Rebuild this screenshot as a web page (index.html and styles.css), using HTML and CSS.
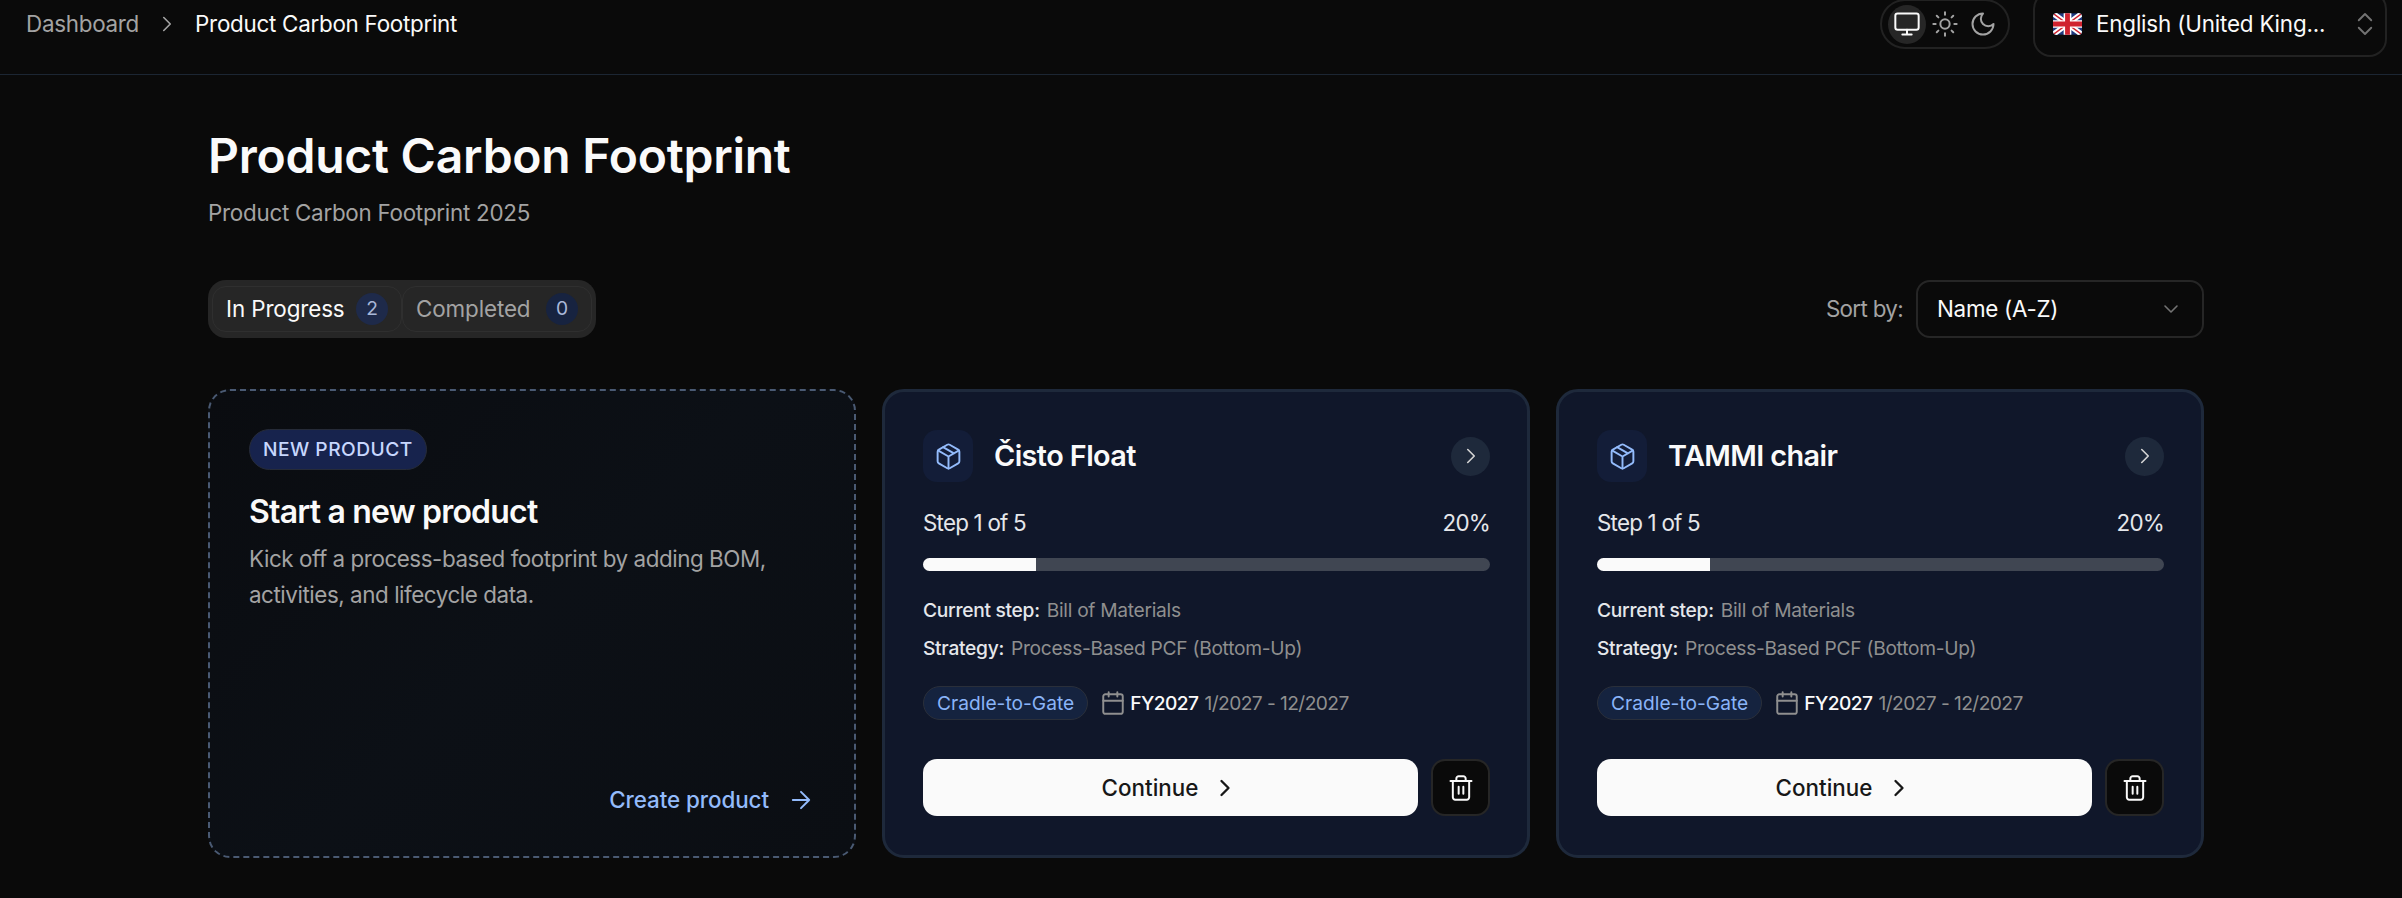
FILE: index.html
```html
<!DOCTYPE html>
<html lang="en">
<head>
  <meta charset="UTF-8">
  <meta name="viewport" content="width=device-width, initial-scale=1.0">
  <title>Product Carbon Footprint</title>
  <link rel="stylesheet" href="styles.css">
</head>
<body>

  <svg class="sprite" xmlns="http://www.w3.org/2000/svg">
    <symbol id="i-monitor" viewBox="0 0 24 24"><rect x="2" y="3" width="20" height="14" rx="2"/><path d="M8 21h8M12 17v4"/></symbol>
    <symbol id="i-sun" viewBox="0 0 24 24"><circle cx="12" cy="12" r="4"/><path d="M12 2v2M12 20v2M4.93 4.93l1.41 1.41M17.66 17.66l1.41 1.41M2 12h2M20 12h2M6.34 17.66l-1.41 1.41M19.07 4.93l-1.41 1.41"/></symbol>
    <symbol id="i-moon" viewBox="0 0 24 24"><path d="M12 3a6 6 0 0 0 9 9 9 9 0 1 1-9-9Z"/></symbol>
    <symbol id="i-updown" viewBox="0 0 24 24"><path d="M7 15l5 5 5-5M7 9l5-5 5 5"/></symbol>
    <symbol id="i-down" viewBox="0 0 24 24"><path d="M6 9l6 6 6-6"/></symbol>
    <symbol id="i-right" viewBox="0 0 24 24"><path d="M9 18l6-6-6-6"/></symbol>
    <symbol id="i-arrow" viewBox="0 0 24 24"><path d="M5 12h14M12 5l7 7-7 7"/></symbol>
    <symbol id="i-package" viewBox="0 0 24 24"><path d="M11 21.73a2 2 0 0 0 2 0l7-4a2 2 0 0 0 1-1.73V8a2 2 0 0 0-1-1.73l-7-4a2 2 0 0 0-2 0l-7 4A2 2 0 0 0 3 8v8a2 2 0 0 0 1 1.73z"/><path d="M12 22V12M3.29 7L12 12l8.71-5M7.5 4.27l9 5.15"/></symbol>
    <symbol id="i-calendar" viewBox="0 0 24 24"><path d="M8 2v4M16 2v4M3 10h18"/><rect x="3" y="4" width="18" height="18" rx="2"/></symbol>
    <symbol id="i-trash" viewBox="0 0 24 24"><path d="M3 6h18M19 6v14c0 1-1 2-2 2H7c-1 0-2-1-2-2V6M8 6V4c0-1 1-2 2-2h4c1 0 2 1 2 2v2M10 11v6M14 11v6"/></symbol>
  </svg>

  <div class="page">
    <header class="topbar">
      <nav class="crumbs">
        <span class="crumb-link">Dashboard</span>
        <svg class="icon crumb-sep"><use href="#i-right"/></svg>
        <span class="crumb-now">Product Carbon Footprint</span>
      </nav>
      <div class="topbar-right">
        <div class="theme">
          <span class="theme-btn active"><svg class="icon"><use href="#i-monitor"/></svg></span>
          <span class="theme-btn"><svg class="icon"><use href="#i-sun"/></svg></span>
          <span class="theme-btn"><svg class="icon"><use href="#i-moon"/></svg></span>
        </div>
        <div class="lang">
          <svg class="flag" viewBox="0 0 60 44">
            <rect width="60" height="44" fill="#1f3a80"/>
            <path d="M0 0L60 44M60 0L0 44" stroke="#fff" stroke-width="11"/>
            <path d="M0 0L60 44M60 0L0 44" stroke="#d0222f" stroke-width="3"/>
            <path d="M30 0V44M0 22H60" stroke="#fff" stroke-width="16"/>
            <path d="M30 0V44M0 22H60" stroke="#d0222f" stroke-width="10"/>
          </svg>
          <span class="lang-name">English (United King...</span>
          <svg class="icon lang-arrows"><use href="#i-updown"/></svg>
        </div>
      </div>
    </header>

    <main class="content">
      <h1 class="title">Product Carbon Footprint</h1>
      <p class="subtitle">Product Carbon Footprint 2025</p>

      <div class="toolbar">
        <div class="tabs">
          <div class="tab active"><span>In Progress</span><span class="count strong">2</span></div>
          <div class="tab"><span>Completed</span><span class="count">0</span></div>
        </div>
        <div class="sort">
          <span class="sort-label">Sort by:</span>
          <div class="sort-select">
            <span>Name (A-Z)</span>
            <svg class="icon"><use href="#i-down"/></svg>
          </div>
        </div>
      </div>

      <div class="cards">
        <section class="card card-new">
          <span class="new-badge">NEW PRODUCT</span>
          <h2 class="new-title">Start a new product</h2>
          <p class="new-text">Kick off a process-based footprint by adding BOM, activities, and lifecycle data.</p>
          <div class="new-link">
            <span>Create product</span>
            <svg class="icon"><use href="#i-arrow"/></svg>
          </div>
        </section>

        <section class="card card-product">
          <div class="card-head">
            <span class="cube"><svg class="icon"><use href="#i-package"/></svg></span>
            <h2 class="card-name">Čisto Float</h2>
            <span class="open"><svg class="icon"><use href="#i-right"/></svg></span>
          </div>
          <div class="step-row"><span>Step 1 of 5</span><span>20%</span></div>
          <div class="bar"><div class="bar-fill" style="width: 20%"></div></div>
          <div class="info"><b>Current step:</b><span>Bill of Materials</span></div>
          <div class="info"><b>Strategy:</b><span>Process-Based PCF (Bottom-Up)</span></div>
          <div class="meta">
            <span class="pill">Cradle-to-Gate</span>
            <svg class="icon cal"><use href="#i-calendar"/></svg>
            <b>FY2027</b>
            <span class="range">1/2027 - 12/2027</span>
          </div>
          <div class="actions">
            <div class="continue"><span>Continue</span><svg class="icon"><use href="#i-right"/></svg></div>
            <div class="trash"><svg class="icon"><use href="#i-trash"/></svg></div>
          </div>
        </section>

        <section class="card card-product">
          <div class="card-head">
            <span class="cube"><svg class="icon"><use href="#i-package"/></svg></span>
            <h2 class="card-name">TAMMI chair</h2>
            <span class="open"><svg class="icon"><use href="#i-right"/></svg></span>
          </div>
          <div class="step-row"><span>Step 1 of 5</span><span>20%</span></div>
          <div class="bar"><div class="bar-fill" style="width: 20%"></div></div>
          <div class="info"><b>Current step:</b><span>Bill of Materials</span></div>
          <div class="info"><b>Strategy:</b><span>Process-Based PCF (Bottom-Up)</span></div>
          <div class="meta">
            <span class="pill">Cradle-to-Gate</span>
            <svg class="icon cal"><use href="#i-calendar"/></svg>
            <b>FY2027</b>
            <span class="range">1/2027 - 12/2027</span>
          </div>
          <div class="actions">
            <div class="continue"><span>Continue</span><svg class="icon"><use href="#i-right"/></svg></div>
            <div class="trash"><svg class="icon"><use href="#i-trash"/></svg></div>
          </div>
        </section>
      </div>
    </main>
  </div>

</body>
</html>
```

FILE: styles.css
```css
html, body {
  margin: 0;
  padding: 0;
  height: 100%;
  overflow: hidden;
}

body {
  background-color: #0a0a0a;
  color: #fafafa;
  font-family: Inter, "Liberation Sans", sans-serif;
  font-size: 22.4px;
  line-height: 36px;
  letter-spacing: -0.012em;
}

h1, h2, p {
  margin: 0;
}

b {
  font-weight: 500;
}

.sprite {
  display: none;
}

.icon {
  width: 24px;
  height: 24px;
  fill: none;
  stroke: currentColor;
  stroke-width: 2;
  stroke-linecap: round;
  stroke-linejoin: round;
  flex: none;
}

/* page is scrolled a little, top of the bar is cut off */
.page {
  margin-top: -26px;
}

/* top bar */
.topbar {
  height: 100px;
  border-bottom: 1px solid #1c2633;
  display: flex;
  align-items: center;
  justify-content: space-between;
  padding: 0 15px 0 26px;
}

.crumbs {
  display: flex;
  align-items: center;
  gap: 15px;
}

.crumb-link {
  color: #a3a3a3;
}

.crumb-sep {
  width: 26px;
  height: 26px;
  color: #a3a3a3;
  stroke-width: 1.5;
}

.topbar-right {
  display: flex;
  align-items: center;
  gap: 23px;
}

.theme {
  height: 50px;
  width: 130px;
  box-sizing: border-box;
  border: 2px solid #222222;
  border-radius: 26px;
  padding: 0 6px;
  display: flex;
  align-items: center;
}

.theme-btn {
  width: 38px;
  height: 39px;
  border-radius: 50%;
  display: flex;
  align-items: center;
  justify-content: center;
  color: #a3a3a3;
}

.theme-btn .icon {
  width: 28px;
  height: 28px;
  stroke-width: 1.7;
}

.theme-btn.active {
  background-color: #262626;
  color: #fafafa;
}

.lang {
  width: 354px;
  height: 66px;
  box-sizing: border-box;
  border: 2px solid #222222;
  border-radius: 18px;
  padding: 0 5px 0 18px;
  display: flex;
  align-items: center;
}

.flag {
  width: 29px;
  height: 22px;
  border-radius: 4px;
  flex: none;
}

.lang-name {
  margin-left: 14px;
  flex: 1;
  white-space: nowrap;
  letter-spacing: -0.008em;
}

.lang-arrows {
  width: 30px;
  height: 30px;
  color: #737373;
  stroke-width: 1.5;
}

/* main */
.content {
  padding: 51px 198px 0 208px;
}

.title {
  font-size: 48px;
  line-height: 60px;
  font-weight: 600;
  letter-spacing: -0.005em;
}

.subtitle {
  margin-top: 9px;
  color: #a3a3a3;
}

.toolbar {
  margin-top: 49px;
  display: flex;
  justify-content: space-between;
  align-items: center;
}

.tabs {
  height: 58px;
  box-sizing: border-box;
  width: 388px;
  padding: 6px 4px;
  background-color: #262626;
  border-radius: 18px;
  display: flex;
}

.tab {
  width: 190px;
  box-sizing: border-box;
  border: 1px solid #2f2f2f;
  border-radius: 14px;
  padding: 0 13px;
  display: flex;
  align-items: center;
  justify-content: space-between;
  color: #a3a3a3;
  letter-spacing: -0.005em;
}

.tab.active {
  color: #fafafa;
}

.count {
  width: 32px;
  height: 32px;
  border-radius: 50%;
  background-color: #172340;
  color: #a9b8d8;
  font-size: 19.2px;
  line-height: 30px;
  text-align: center;
}

.count.strong {
  background-color: #1e2a4a;
}

.sort {
  display: flex;
  align-items: center;
  gap: 13px;
}

.sort-label {
  color: #a3a3a3;
  letter-spacing: -0.03em;
}

.sort-select {
  width: 288px;
  height: 58px;
  box-sizing: border-box;
  border: 2px solid #262626;
  border-radius: 14px;
  padding: 0 19px;
  display: flex;
  align-items: center;
  justify-content: space-between;
}

.sort-select .icon {
  color: #737373;
  stroke-width: 1.6;
}

/* cards */
.cards {
  margin-top: 51px;
  display: grid;
  grid-template-columns: repeat(3, 1fr);
  gap: 26px;
}

.card {
  height: 469px;
  box-sizing: border-box;
  border-radius: 22px;
  display: flex;
  flex-direction: column;
}

.card-new {
  border: 2px dashed #4a5a73;
  background: linear-gradient(135deg, #0a0c10, #0c1016 50%, #0b0e13);
  align-items: flex-start;
  padding: 38px 38px 0 39px;
}

.new-badge {
  height: 41px;
  box-sizing: border-box;
  padding: 0 13px;
  border: 1px solid #262b38;
  border-radius: 21px;
  background-color: #17234d;
  color: #c7d7fe;
  font-size: 19.2px;
  font-weight: 500;
  line-height: 39px;
  letter-spacing: 0.025em;
}

.new-title {
  margin-top: 22px;
  font-size: 32px;
  line-height: 40px;
  font-weight: 600;
  letter-spacing: -0.025em;
}

.new-text {
  margin-top: 9px;
  color: #a3a3a3;
  letter-spacing: -0.02em;
}

.new-link {
  margin: auto 1px 38px auto;
  display: flex;
  align-items: center;
  gap: 18px;
  color: #93bbfb;
  font-weight: 500;
  letter-spacing: -0.003em;
}

.new-link .icon {
  width: 28px;
  height: 28px;
  stroke-width: 1.7;
}

.card-product {
  border: 3px solid #1e293b;
  background-color: #10172a;
  padding: 38px 37px 0 38px;
}

.card-head {
  display: flex;
  align-items: center;
  height: 52px;
}

.cube {
  width: 50px;
  height: 52px;
  border-radius: 14px;
  background-color: #131d38;
  color: #93bbfb;
  display: flex;
  align-items: center;
  justify-content: center;
}

.cube .icon {
  width: 29px;
  height: 29px;
  stroke-width: 1.6;
}

.card-name {
  margin-left: 21px;
  flex: 1;
  font-size: 28.8px;
  line-height: 40px;
  font-weight: 600;
  letter-spacing: -0.02em;
}

.open {
  width: 39px;
  height: 39px;
  border-radius: 50%;
  background-color: #1e293b;
  color: #d4d4d4;
  display: flex;
  align-items: center;
  justify-content: center;
}

.open .icon {
  width: 26px;
  height: 26px;
  stroke-width: 1.5;
}

.step-row {
  margin-top: 23px;
  display: flex;
  justify-content: space-between;
  color: #e5e7eb;
  letter-spacing: -0.035em;
}

.bar {
  margin-top: 17px;
  margin-bottom: 20px;
  height: 13px;
  border-radius: 7px;
  background-color: #404652;
  overflow: hidden;
}

.bar-fill {
  height: 100%;
  background-color: #fafafa;
}

.info {
  display: flex;
  gap: 7px;
  font-size: 19.2px;
  line-height: 38px;
  letter-spacing: -0.015em;
  color: #8f8f8f;
}

.info b {
  color: #e5e7eb;
}

.meta {
  margin-top: 19px;
  height: 34px;
  display: flex;
  align-items: center;
  font-size: 19.2px;
  letter-spacing: -0.03em;
}

.pill {
  height: 34px;
  box-sizing: border-box;
  padding: 0 13px;
  border: 1px solid #2a2f3a;
  border-radius: 17px;
  background-color: #15233f;
  color: #8ab4f8;
  line-height: 32px;
  letter-spacing: 0;
}

.cal {
  margin-left: 12px;
  width: 26px;
  height: 26px;
  color: #8f8f8f;
  stroke-width: 1.8;
}

.meta b {
  margin-left: 4px;
}

.range {
  margin-left: 6px;
  color: #8f8f8f;
}

.actions {
  margin-top: 39px;
  display: flex;
  gap: 13px;
}

.continue {
  flex: 1;
  height: 57px;
  border-radius: 14px;
  background-color: #fafafa;
  color: #171717;
  font-weight: 450;
  letter-spacing: 0;
  display: flex;
  align-items: center;
  justify-content: center;
  gap: 13px;
}

.continue .icon {
  width: 28px;
  height: 28px;
}

.trash {
  width: 59px;
  height: 57px;
  box-sizing: border-box;
  border: 2px solid #262626;
  border-radius: 14px;
  background-color: #0a0a0a;
  display: flex;
  align-items: center;
  justify-content: center;
}

.trash .icon {
  width: 28px;
  height: 28px;
  stroke-width: 1.7;
}
```
